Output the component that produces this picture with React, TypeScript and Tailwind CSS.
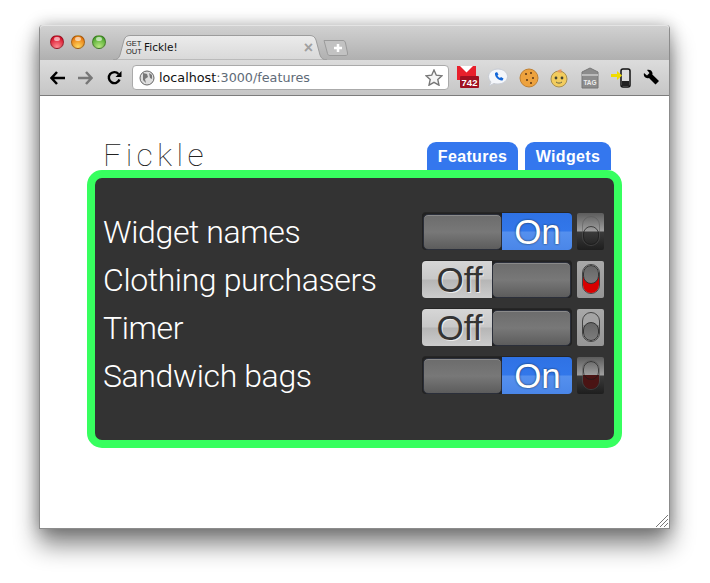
import React from 'react';

const SANS = 'font-["Liberation_Sans",Arial,sans-serif]';

// One row: label, sliding switch and the little lamp beside it
type Lamp = 'dark' | 'red' | 'grey' | 'dim';

const Knob = () => (
  <div className="h-[36px] w-[79px] shrink-0 rounded-[5px] border border-[#2b2f3a] bg-[linear-gradient(#6c6c6c_0%,#787878_50%,#5c5c5c_100%)] shadow-[inset_0_1px_0_#8a8a8a]" />
);

const Toggle = ({ on }: { on: boolean }) => (
  <div className="flex h-[37px] w-[150px] overflow-hidden rounded-[4px] bg-[#222] shadow-[0_-1px_0_#262626]">
    {on ? (
      <>
        <div className="ml-[1px] self-end">
          <Knob />
        </div>
        <div className="flex flex-1 items-center justify-center bg-[linear-gradient(#2f72e4_0%,#3277ea_48%,#5590ee_52%,#4a86e8_100%)] pl-[1px] text-[35px] leading-none text-white [text-shadow:0_0_2px_#123]">
          On
        </div>
      </>
    ) : (
      <>
        <div className="flex flex-1 items-center justify-center bg-[linear-gradient(#d6d6d6_0%,#c8c8c8_48%,#b6b6b6_52%,#cccccc_100%)] pl-[5px] text-[35px] leading-none text-[#333] [text-shadow:1px_1px_0_#eee]">
          Off
        </div>
        <div className="mr-[1px] self-end">
          <Knob />
        </div>
      </>
    )}
  </div>
);

const LampBox = ({ kind }: { kind: Lamp }) => {
  if (kind === 'red' || kind === 'grey') {
    return (
      <div className="flex h-[37px] w-[27px] justify-center rounded-[2px] bg-[linear-gradient(#a8a8a8,#969696)] pt-[3px]">
        <div className="relative h-[30px] w-[18px] overflow-hidden rounded-[9px] border border-[#444] bg-[#a4a4a4]">
          <div className={`absolute inset-x-0 bottom-0 h-[16px] ${kind === 'red' ? 'bg-[#d80000]' : 'bg-[#8a8a8a]'}`} />
          <div
            className={`absolute inset-x-0 h-[19px] rounded-[9px] border border-[#333] bg-[linear-gradient(#666,#7c7c7c)] ${
              kind === 'red' ? 'top-0' : 'bottom-0'
            }`}
          />
        </div>
      </div>
    );
  }
  return (
    <div className="flex h-[37px] w-[27px] justify-center overflow-hidden rounded-[2px] bg-[linear-gradient(#5c5c5c_0%,#9e9e9e_48%,#3a3a3a_52%,#1e1e1e_100%)] pt-[3px]">
      <div className="relative h-[30px] w-[18px] overflow-hidden rounded-[9px] border border-[#555]/50">
        <div className={`absolute inset-x-0 bottom-0 h-[14px] ${kind === 'dim' ? 'bg-[#4a1414]' : 'bg-transparent'}`} />
        <div
          className={`absolute inset-x-0 h-[19px] rounded-[9px] border border-[#1c1c1c]/70 ${
            kind === 'dark' ? 'bottom-0' : 'top-0'
          }`}
        />
      </div>
    </div>
  );
};

const features: { label: string; on: boolean; lamp: Lamp }[] = [
  { label: 'Widget names', on: true, lamp: 'dark' },
  { label: 'Clothing purchasers', on: false, lamp: 'red' },
  { label: 'Timer', on: false, lamp: 'grey' },
  { label: 'Sandwich bags', on: true, lamp: 'dim' },
];

const TrafficLight = ({ from, to }: { from: string; to: string }) => (
  <div
    className="relative h-[14px] w-[14px] rounded-full border border-black/30"
    style={{ background: `radial-gradient(circle at 50% 90%, ${to}, ${from} 75%)` }}
  >
    <div className="absolute left-[3px] top-[1px] h-[4px] w-[6px] rounded-full bg-white/60" />
  </div>
);

const ToolbarIcons = () => (
  <div className="flex items-center">
    {/* gmail */}
    <svg width="24" height="26" viewBox="0 0 24 26" className="ml-[7px]">
      <rect x="1" y="1" width="19" height="14" fill="#e8202c" />
      <path d="M4 1l6.500 6.500L17 1z" fill="#fff" />
      <rect x="4" y="11" width="19" height="12" rx="1" fill="#a01020" />
      <text x="13.500" y="21" fontSize="9.500" fontWeight="700" fill="#fff" textAnchor="middle" fontFamily="Liberation Sans">742</text>
    </svg>
    {/* phone bubble */}
    <svg width="22" height="20" viewBox="0 0 22 20" className="ml-[7px]">
      <path d="M11 1c5.500 0 9.500 3.500 9.500 7.500S16.500 16 11 16c-1.500 0-3-.2-4-.6L2 18l2-4C2.500 12.500 1.500 10.500 1.500 8.500 1.500 4.500 5.500 1 11 1z" fill="#f4f6fa" stroke="#c8ccd4" />
      <path d="M8 5l2-1 1.500 2.500-1 1c.5 1.200 1.300 2 2.500 2.500l1-1 2.500 1.500-1 2c-4 .5-8-4-7.500-7z" fill="#1367d8" />
    </svg>
    {/* cookie */}
    <svg width="20" height="20" viewBox="0 0 20 20" className="ml-[10px]">
      <circle cx="10" cy="10" r="9" fill="#eda23e" stroke="#c08030" />
      <circle cx="7" cy="6" r="1" fill="#5a3414" />
      <circle cx="12" cy="5" r="1" fill="#5a3414" />
      <circle cx="14" cy="10" r="1" fill="#5a3414" />
      <circle cx="8" cy="12" r="1" fill="#5a3414" />
      <circle cx="12" cy="15" r="1" fill="#5a3414" />
    </svg>
    {/* baby face */}
    <svg width="20" height="20" viewBox="0 0 20 20" className="ml-[10px]">
      <circle cx="10" cy="11" r="8" fill="#f2cc5e" stroke="#a89050" />
      <path d="M8 4c1-2 3-3 5-2-1 .8-1 1.600 0 3z" fill="#e89a60" />
      <circle cx="7" cy="10" r="1.400" fill="#443" />
      <circle cx="13" cy="10" r="1.400" fill="#443" />
      <path d="M7 14c2 1.500 4 1.500 6 0" stroke="#664" fill="none" />
    </svg>
    {/* tag */}
    <svg width="18" height="22" viewBox="0 0 18 22" className="ml-[12px]">
      <path d="M9 1l8 4v16H1V5z" fill="#8c8c8c" stroke="#777" />
      <rect x="1" y="7" width="16" height="2" fill="#bbb" />
      <text x="9" y="18" fontSize="6.500" fontWeight="700" fill="#eee" textAnchor="middle" fontFamily="Liberation Sans">TAG</text>
    </svg>
    {/* phone with arrow */}
    <svg width="22" height="20" viewBox="0 0 22 20" className="ml-[11px]">
      <rect x="11" y="1" width="9" height="18" rx="2" fill="#ddd" stroke="#111" strokeWidth="1.500" />
      <rect x="12" y="13" width="7" height="5" fill="#222" />
      <path d="M1 6h6V3l5 4.500L7 12V9H1z" fill="#f0dc00" />
    </svg>
    {/* wrench */}
    <svg width="17" height="17" viewBox="0 0 17 17" className="ml-[11px]">
      <path d="M1 4l3 2.500L6.500 4 4 1c2.500-.8 5 .5 5.500 3 0 .7 0 1-.2 1.500L16 12l-3.500 3.500-6.500-6.500c-3 1-6-1.500-5-5z" fill="#000" />
    </svg>
  </div>
);

const TabShape = () => (
  <svg width="214" height="25" viewBox="0 0 214 25" className="absolute inset-0">
    <defs>
      <linearGradient id="tabFill" x1="0" y1="0" x2="0" y2="1">
        <stop offset="0" stopColor="#ececec" />
        <stop offset="1" stopColor="#d8d8d8" />
      </linearGradient>
    </defs>
    <path
      d="M0 25C4 25 6 23 7 20L11 5C12 2 14 .5 17 .5H197C200 .5 202 2 203 5L207 20C208 23 210 25 214 25Z"
      fill="url(#tabFill)"
      stroke="#9c9c9c"
    />
  </svg>
);

const NewTabButton = () => (
  <svg width="25" height="16" viewBox="0 0 25 16" className="-ml-[4px] mb-[4px]">
    <path d="M1 .5H20C21.500 .5 22 1.500 22.500 3L24.500 13C25 15 24 15.500 22 15.500H7C5.500 15.500 5 15 4.500 13.500Z" fill="#c2c2c2" stroke="#9a9a9a" />
    <path d="M11 8h8M15 4v8" stroke="#fff" strokeWidth="2.500" />
  </svg>
);

// Active tab paints over the new-tab button
const Tabs = () => (
  <>
    <div className="relative z-10 h-[25px] w-[214px]">
      <TabShape />
      <div className="relative flex h-full items-center pl-[13px] pr-[14px]">
        <div className="w-[16px] text-[7.500px] leading-[8px] text-[#222]">
          GET
          <br />
          OUT
        </div>
        <span className='ml-[2px] flex-1 font-["DejaVu_Sans"] text-[10.500px] text-[#111]'>Fickle!</span>
        <span className="text-[16px] font-bold leading-none text-[#a0a0a0]">×</span>
      </div>
    </div>
    <NewTabButton />
  </>
);

export default function App() {
  return (
    <div className={`h-[583px] w-[710px] overflow-hidden bg-white pl-[39px] pt-[25px] ${SANS}`}>
      <div className="flex h-[504px] w-[631px] flex-col rounded-t-[4px] border border-t-0 border-[#8c8c8c] bg-white shadow-[0_16px_24px_rgba(0,0,0,0.48),0_0_16px_rgba(0,0,0,0.28)]">
        {/* tab strip */}
        <div className="flex h-[35px] items-end rounded-t-[4px] bg-[linear-gradient(#d2d2d2,#b0b0b0)] pl-[10px] shadow-[inset_0_1px_0_#e4e4e4]">
          <div className="mb-[11px] mr-[7px] flex gap-[7px]">
            <TrafficLight from="#d8142c" to="#ff8a90" />
            <TrafficLight from="#e87a10" to="#ffd860" />
            <TrafficLight from="#50a830" to="#b8e880" />
          </div>
          <Tabs />
        </div>
        {/* toolbar */}
        <div className="flex h-[36px] items-center border-b border-b-[#7c7c7c] bg-[linear-gradient(#dcdcdc,#c6c6c6)] pl-[10px]">
          <svg width="15" height="14" viewBox="0 0 15 14">
            <path d="M7 1L1.500 7 7 13M2 7h13" fill="none" stroke="#000" strokeWidth="2.500" />
          </svg>
          <svg width="15" height="14" viewBox="0 0 15 14" className="ml-[13px]">
            <path d="M8 1l5.500 6L8 13M13 7H0" fill="none" stroke="#777" strokeWidth="2.500" />
          </svg>
          <svg width="15" height="15" viewBox="0 0 15 15" className="ml-[14px]">
            <path d="M12.500 9.500a5.500 5.500 0 1 1-1-5.500" fill="none" stroke="#000" strokeWidth="2.400" />
            <path d="M14.500 1v6h-6z" fill="#000" />
          </svg>
          <div className="ml-[10px] flex h-[25px] w-[317px] items-center rounded-[4px] border border-[#aaa] bg-white pl-[6px] pr-[5px]">
            <svg width="16" height="16" viewBox="0 0 16 16">
              <circle cx="8" cy="8" r="7" fill="#ddd" stroke="#666" />
              <path d="M4 3l4 1 1 3-3 2 1 4-3-3zM10 3l3 2v4l-2-1z" fill="#777" />
            </svg>
            <span className='ml-[4px] flex-1 font-["DejaVu_Sans"] text-[12.750px] text-[#111]'>
              localhost<span className="text-[#5f6b78]">:3000/features</span>
            </span>
            <svg width="18" height="17" viewBox="0 0 18 17">
              <path d="M9 1l2.300 5.200 5.700.6-4.200 3.800 1.200 5.600L9 13.300 4 16.200l1.200-5.600L1 6.800l5.700-.6z" fill="#f6f6f6" stroke="#777" strokeWidth="1.400" />
            </svg>
          </div>
          <ToolbarIcons />
        </div>

        {/* page */}
        <div className="relative flex-1 px-[47px] pt-[38px]">
          <div className="flex h-[36px] items-end justify-between pl-[16px] pr-[11px]">
            <div className='font-["Roboto"] text-[32px] font-thin leading-[30px] tracking-[0.135em] text-[#222]'>Fickle</div>
            <div className="flex gap-[7px]">
              <div className="flex h-[28px] w-[91px] items-center justify-center rounded-t-[9px] bg-[#3477ee] pt-[1px] text-[16px] font-bold tracking-[0.02em] text-white">
                Features
              </div>
              <div className="flex h-[28px] w-[86px] items-center justify-center rounded-t-[9px] bg-[#3477ee] pt-[1px] text-[16px] font-bold tracking-[0.02em] text-white">
                Widgets
              </div>
            </div>
          </div>
          <div className="flex h-[278px] flex-col rounded-[15px] border-[8px] border-[#37ff5f] bg-[#333] pl-[8px] pr-[10px] pt-[29px]">
            {features.map((f) => (
              <div key={f.label} className="flex h-[48px] items-center">
                <div className='flex-1 pt-[2px] font-["Roboto"] text-[32px] font-light leading-none tracking-[-0.012em] text-white'>{f.label}</div>
                <Toggle on={f.on} />
                <div className="ml-[5px]">
                  <LampBox kind={f.lamp} />
                </div>
              </div>
            ))}
          </div>
          {/* resize grip */}
          <svg width="12" height="12" viewBox="0 0 12 12" className="absolute bottom-[1px] right-[1px]">
            <path d="M0 12L12 0M4 12l8-8M8 12l4-4" stroke="#777" />
          </svg>
        </div>
      </div>
    </div>
  );
}
